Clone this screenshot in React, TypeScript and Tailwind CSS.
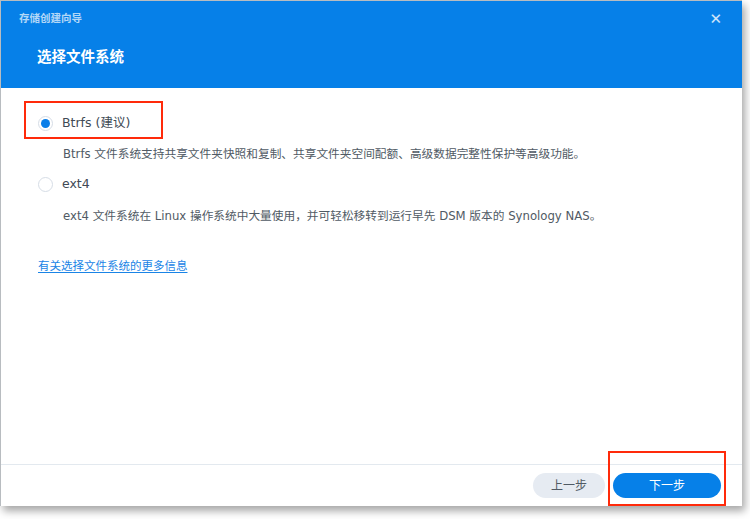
import React, { useState } from 'react'

const font = { fontFamily: '"DejaVu Sans", "Noto Sans CJK SC", sans-serif' }

interface OptionProps {
  label: string
  desc: string
  checked: boolean
  onSelect: () => void
}

function FsOption({ label, desc, checked, onSelect }: OptionProps) {
  return (
    <div className="flex flex-col">
      <button onClick={onSelect} className="flex h-[24px] items-center gap-[9px] text-left">
        {checked ? (
          <span className="flex h-[15px] w-[15px] items-center justify-center rounded-full border border-[#d6dde6] bg-white">
            <span className="h-[9px] w-[9px] rounded-full bg-[#0a7ee8]" />
          </span>
        ) : (
          <span className="h-[15px] w-[15px] rounded-full border border-[#d6dde6] bg-white" />
        )}
        <span className="text-[12.5px] text-[#404a55]">{label}</span>
      </button>
      <p className="mt-[11px] pl-[25px] text-[11.7px] text-[#505a64]">{desc}</p>
    </div>
  )
}

export default function App() {
  const [fs, setFs] = useState('btrfs')

  return (
    <div className="h-[519px] w-[750px] overflow-hidden bg-white" style={font}>
      <div className="flex h-[506px] w-[742px] flex-col border-l border-t border-[#b8bcc0] bg-white shadow-[3px_5px_8px_rgba(0,0,0,0.35)]">
        {/* header */}
        <div className="flex h-[87px] flex-col bg-[#0680e8] px-[18px]">
          <div className="flex h-[36px] items-center justify-between">
            <span className="text-[10.5px] font-bold text-white/70">存储创建向导</span>
            <span className="mr-[2px] text-[15px] font-bold leading-none text-white/80">✕</span>
          </div>
          <div className="mt-[10px] pl-[18px] text-[14.5px] font-bold text-white">选择文件系统</div>
        </div>

        {/* body */}
        <div className="flex flex-1 flex-col px-[37px] pt-[23px]">
          <div className="relative">
            <div className="pointer-events-none absolute left-[-14px] top-[-10px] h-[38px] w-[139px] border-[2.5px] border-[#ff2a0a]" />
            <FsOption
              label="Btrfs (建议)"
              desc="Btrfs 文件系统支持共享文件夹快照和复制、共享文件夹空间配额、高级数据完整性保护等高级功能。"
              checked={fs === 'btrfs'}
              onSelect={() => setFs('btrfs')}
            />
          </div>
          <div className="mt-[9px]">
            <FsOption
              label="ext4"
              desc="ext4 文件系统在 Linux 操作系统中大量使用，并可轻松移转到运行早先 DSM 版本的 Synology NAS。"
              checked={fs === 'ext4'}
              onSelect={() => setFs('ext4')}
            />
          </div>
          <a className="mt-[33px] self-start text-[11.5px] text-[#1a84e6] underline underline-offset-2" href="#">
            有关选择文件系统的更多信息
          </a>
        </div>

        {/* footer */}
        <div className="flex h-[42px] items-center justify-end gap-[8px] border-t border-[#e3e9ef] pr-[21px]">
          <button className="h-[25px] w-[72px] rounded-full bg-[#e6ebf2] text-[12px] text-[#505a64]">上一步</button>
          <div className="relative">
            <div className="pointer-events-none absolute left-[-5px] top-[-22px] h-[55px] w-[118px] border-[2.5px] border-[#ff2a0a]" />
            <button className="h-[25px] w-[108px] rounded-full bg-[#0680e8] text-[12px] text-white">下一步</button>
          </div>
        </div>
      </div>
    </div>
  )
}
